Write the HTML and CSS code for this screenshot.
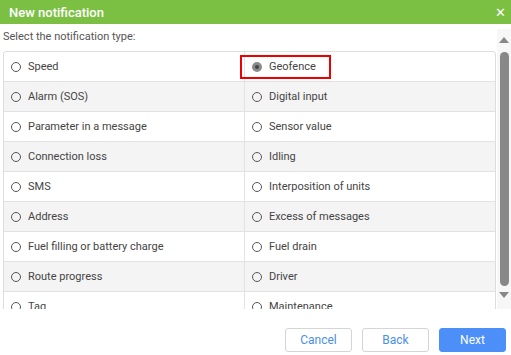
FILE: index.html
```html
<!DOCTYPE html>
<html>
<head>
<meta name="viewport" content="width=device-width, initial-scale=1">
<link rel="stylesheet" href="styles.css">
</head>
<body>

<div class="dialog">
  <div class="header">
    <span class="title">New notification</span>
    <span class="close">&#x2715;</span>
  </div>

  <div class="body">
    <div class="pane">
      <div class="label">Select the notification type:</div>
      <div class="types">
        <label class="cell"><span class="radio"></span>Speed</label>
        <label class="cell right"><span class="picked"><span class="radio checked"></span>Geofence</span></label>
        <label class="cell"><span class="radio"></span>Alarm (SOS)</label>
        <label class="cell right"><span class="radio"></span>Digital input</label>
        <label class="cell"><span class="radio"></span>Parameter in a message</label>
        <label class="cell right"><span class="radio"></span>Sensor value</label>
        <label class="cell"><span class="radio"></span>Connection loss</label>
        <label class="cell right"><span class="radio"></span>Idling</label>
        <label class="cell"><span class="radio"></span>SMS</label>
        <label class="cell right"><span class="radio"></span>Interposition of units</label>
        <label class="cell"><span class="radio"></span>Address</label>
        <label class="cell right"><span class="radio"></span>Excess of messages</label>
        <label class="cell"><span class="radio"></span>Fuel filling or battery charge</label>
        <label class="cell right"><span class="radio"></span>Fuel drain</label>
        <label class="cell"><span class="radio"></span>Route progress</label>
        <label class="cell right"><span class="radio"></span>Driver</label>
        <label class="cell"><span class="radio"></span>Tag</label>
        <label class="cell right"><span class="radio"></span>Maintenance</label>
      </div>
    </div>
    <div class="scrollbar">
      <span class="arrow up"></span>
      <span class="thumb"></span>
      <span class="arrow down"></span>
    </div>
  </div>

  <div class="footer">
    <button class="btn">Cancel</button>
    <button class="btn">Back</button>
    <button class="btn primary">Next</button>
  </div>
</div>

</body>
</html>
```

FILE: styles.css
```css
body {
  margin: 0;
  background: #fff;
  font-family: Roboto, "Liberation Sans", sans-serif;
  color: #444;
}

.dialog {
  width: 511px;
  height: 355px;
  display: flex;
  flex-direction: column;
}

/* Green title bar */
.header {
  height: 24px;
  background: #7cc043;
  color: #fff;
  display: flex;
  align-items: center;
  justify-content: space-between;
  padding: 0 5px 0 9px;
}

.title {
  font-size: 13px;
  font-weight: 500;
}

.close {
  font-size: 13px;
  line-height: 1;
}

/* Scrolling list of types */
.body {
  display: flex;
  height: 280px;
  margin-top: 5px;
  overflow: hidden;
}

.pane {
  flex: 1;
  padding-left: 3px;
  padding-right: 1px;
  overflow: hidden;
}

.label {
  height: 16px;
  line-height: 16px;
  font-size: 11px;
  color: #555;
  margin-bottom: 6px;
}

.types {
  display: grid;
  grid-template-columns: 240px 1fr;
  border: 1px solid #ddd;
  border-radius: 3px;
}

.cell {
  height: 29px;
  border-bottom: 1px solid #e2e2e2;
  display: flex;
  align-items: center;
  padding-left: 7px;
  font-size: 11px;
  color: #444;
}

.cell.right {
  border-left: 1px solid #e2e2e2;
}

.cell:nth-child(4n+3),
.cell:nth-child(4n+4) {
  background: #f4f4f4;
}

.radio {
  width: 8px;
  height: 8px;
  border: 1px solid #555;
  border-radius: 50%;
  margin-right: 7px;
  flex-shrink: 0;
}

.radio.checked {
  width: 4px;
  height: 4px;
  border: 3px solid #8a8a8a;
  background: #444;
}

/* Red highlight round the chosen type */
.picked {
  display: flex;
  align-items: center;
  height: 20px;
  margin-left: -12px;
  padding: 0 13px 0 10px;
  border: 2px solid #e00;
  position: relative;
}

/* Fake scrollbar */
.scrollbar {
  width: 14px;
  background: #f7f7f7;
  display: flex;
  flex-direction: column;
  align-items: center;
  padding-top: 8px;
}

.arrow {
  width: 0;
  height: 0;
  border-left: 5px solid transparent;
  border-right: 5px solid transparent;
}

.arrow.up {
  border-bottom: 6px solid #888;
}

.arrow.down {
  border-top: 6px solid #888;
  margin-top: 6px;
}

.thumb {
  width: 9px;
  height: 234px;
  background: #888;
  border-radius: 5px;
  margin-top: 9px;
}

/* Buttons */
.footer {
  display: flex;
  justify-content: flex-end;
  gap: 10px;
  padding: 19px 5px 0 0;
}

.btn {
  width: 67px;
  height: 24px;
  font-family: Roboto, "Liberation Sans", sans-serif;
  font-size: 12px;
  color: #4a8fe7;
  background: #fff;
  border: 1px solid #d5d5d5;
  border-radius: 3px;
}

.btn.primary {
  background: #4d8ff8;
  border-color: #4d8ff8;
  color: #fff;
}
```
